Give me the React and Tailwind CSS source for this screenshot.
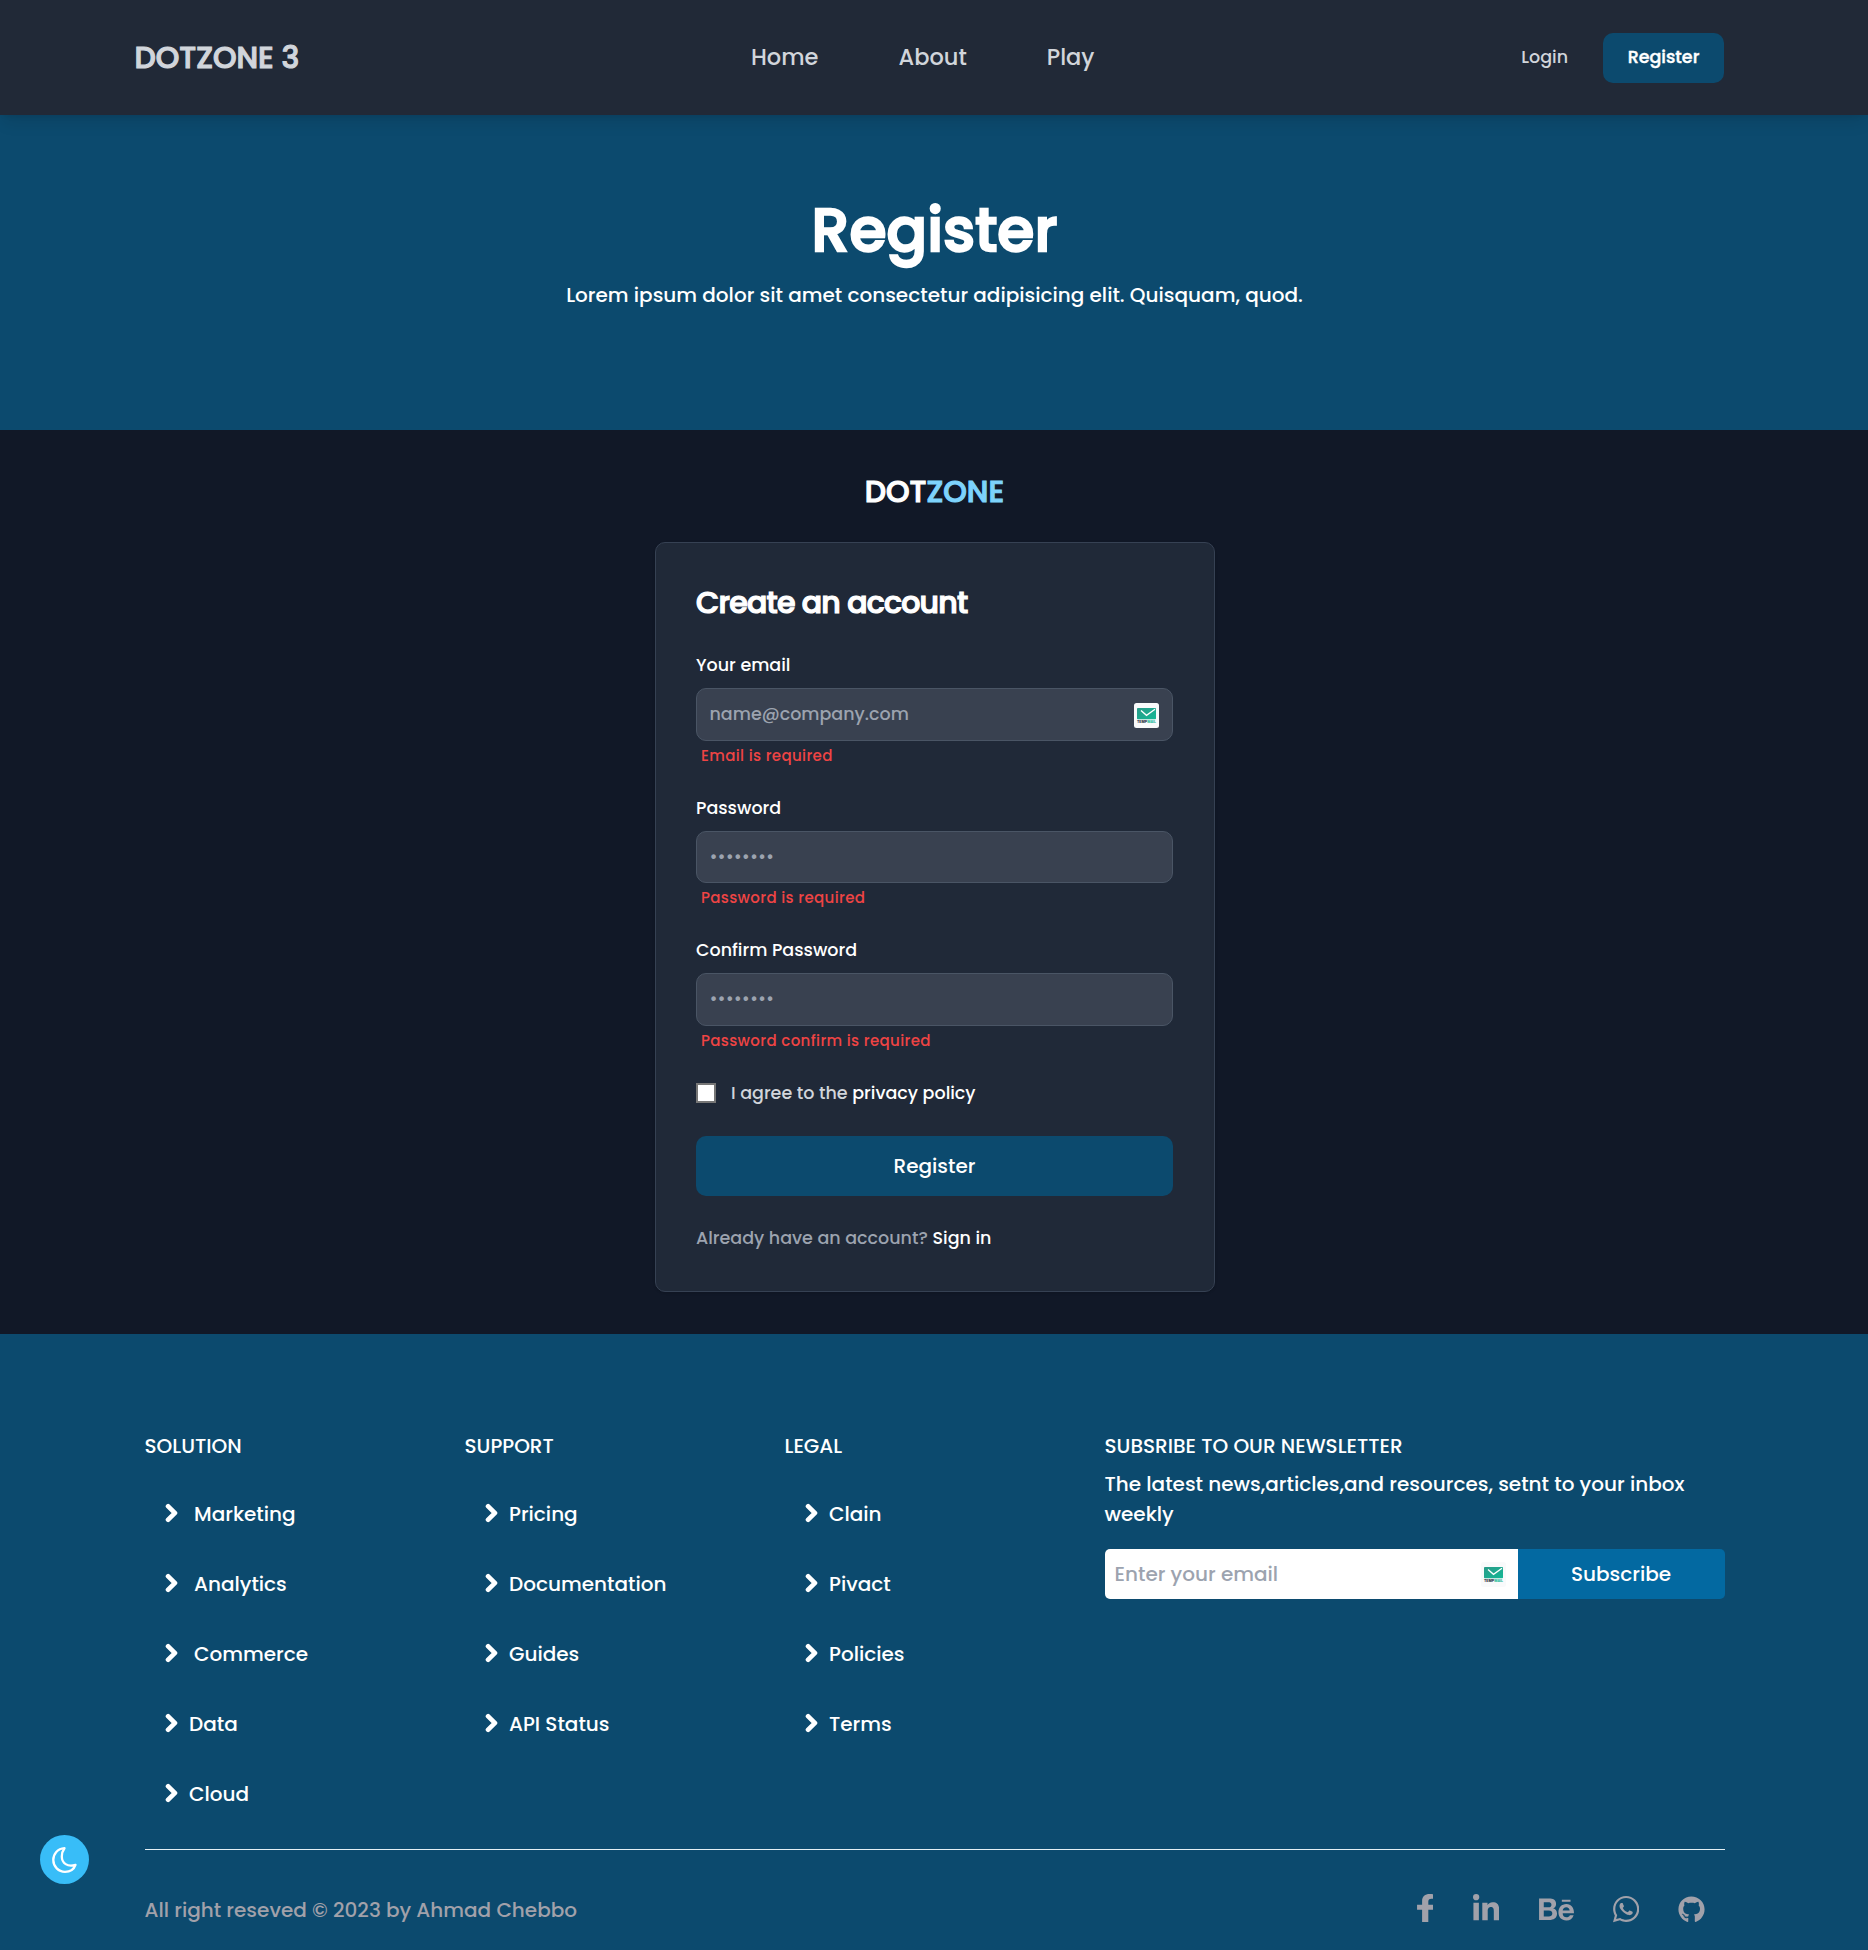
import {
  FaBehance,
  FaChevronRight,
  FaFacebookF,
  FaGithub,
  FaLinkedinIn,
  FaWhatsapp,
} from "react-icons/fa";

const columns = [
  {
    title: "SOLUTION",
    links: [
      { label: "Marketing", wide: true },
      { label: "Analytics", wide: true },
      { label: "Commerce", wide: true },
      { label: "Data" },
      { label: "Cloud" },
    ],
  },
  {
    title: "SUPPORT",
    links: [{ label: "Pricing" }, { label: "Documentation" }, { label: "Guides" }, { label: "API Status" }],
  },
  {
    title: "LEGAL",
    links: [{ label: "Clain" }, { label: "Pivact" }, { label: "Policies" }, { label: "Terms" }],
  },
];

function MailBadge({ className }) {
  return (
    <svg viewBox="0 0 25 25" className={className} aria-hidden="true">
      <defs>
        <linearGradient id="mail" x1="0" y1="0" x2="1" y2="1">
          <stop offset="0" stopColor="#2a9a88" />
          <stop offset="1" stopColor="#14b896" />
        </linearGradient>
      </defs>
      <rect width="25" height="25" rx="2.5" fill="#f9fafb" />
      <rect x="3" y="5" width="19" height="11.2" rx="0.8" fill="url(#mail)" />
      <path d="M7 7.5 L12.5 12.3 L21 6.3" fill="none" stroke="#ffffff" strokeWidth="1.3" />
      <text x="3" y="20.3" fontSize="3.6" fontWeight="800" fontFamily="Inter, sans-serif" fill="#1f2937" textLength="10" lengthAdjust="spacingAndGlyphs">
        TEMP
      </text>
      <text x="13.2" y="20.3" fontSize="3.6" fontWeight="800" fontFamily="Inter, sans-serif" fill="#14b896" textLength="8.8" lengthAdjust="spacingAndGlyphs">
        MAIL
      </text>
    </svg>
  );
}

function Field({ label, placeholder, error, type, badge }) {
  return (
    <div className="flex flex-col">
      <label className="mb-2.5 text-[17.5px] leading-[26px] text-white">{label}</label>
      <div className="flex h-[52.5px] items-center rounded-[10px] border border-gray-600 bg-[#394150] pt-px pr-[13px] pl-[12.5px]">
        <input
          type={type}
          placeholder={placeholder}
          className="min-w-0 flex-1 bg-transparent text-[17.5px] leading-[25px] text-white outline-none placeholder:text-[#9ca3af]"
        />
        {badge && <MailBadge className="mt-px size-[25px]" />}
      </div>
      <p className="mt-[5px] ml-[5px] text-[15px] leading-5 tracking-wide text-[#ef4444]">{error}</p>
    </div>
  );
}

export default function App() {
  return (
    <div className="flex h-[1950px] w-full flex-col overflow-hidden bg-[#111827] font-[Poppins,Inter,sans-serif] font-medium text-white">
      <header className="relative z-10 flex h-[115px] shrink-0 items-center bg-[#212937] pr-36 pl-[134.5px] text-[#d1d5db] shadow-lg">
        <div className="w-[616.5px] text-[30px] leading-10 [-webkit-text-stroke:1.1px]">DOTZONE 3</div>
        <nav className="flex gap-20 text-[22.5px] leading-[35px]">
          <a>Home</a>
          <a>About</a>
          <a>Play</a>
        </nav>
        <div className="ml-auto flex items-center gap-[35px] text-[17.5px] leading-[25px]">
          <a>Login</a>
          <a className="flex h-[50px] w-[121px] items-center justify-center rounded-[10px] bg-[#0c4a6e] text-white [-webkit-text-stroke:0.4px]">
            Register
          </a>
        </div>
      </header>

      <section className="flex h-[315px] shrink-0 flex-col items-center bg-[#0c4a6e] pt-[85px] pl-px">
        <h1 className="text-[60px] leading-[60px] [-webkit-text-stroke:2.3px]">Register</h1>
        <p className="mt-[21px] text-[20px] leading-[28px]">
          Lorem ipsum dolor sit amet consectetur adipisicing elit. Quisquam, quod.
        </p>
      </section>

      <main className="flex h-[904px] shrink-0 flex-col items-center pt-[42px]">
        <div className="pl-px text-[30px] leading-10 [-webkit-text-stroke:1.1px]">
          DOT<span className="text-[#7dd3fc]">ZONE</span>
        </div>
        <form className="mt-[30px] ml-0.5 h-[750px] w-[560px] rounded-[10px] border border-gray-700 bg-[#202938] pt-10 pr-[41px] pl-10 shadow">
          <h2 className="text-[30px] leading-[39px] tracking-tight [-webkit-text-stroke:1.2px]">Create an account</h2>
          <div className="mt-[30px] flex flex-col gap-[29px]">
            <Field label="Your email" type="email" placeholder="name@company.com" error="Email is required" badge />
            <Field label="Password" type="password" placeholder="••••••••" error="Password is required" />
            <Field
              label="Confirm Password"
              type="password"
              placeholder="••••••••"
              error="Password confirm is required"
            />
          </div>
          <div className="mt-[30px] flex items-center text-[17.5px] leading-[25px] text-[#d1d5db]">
            <span className="mr-[15px] size-5 border-2 border-[#767676] bg-white" />
            <span>
              I agree to the <a className="text-white">privacy policy</a>
            </span>
          </div>
          <button
            type="button"
            className="mt-[30px] h-[60px] w-full rounded-[10px] bg-[#0c4a6e] text-[20px] leading-[30px]"
          >
            Register
          </button>
          <p className="mt-[30px] text-[17.5px] leading-[25px] text-[#9ca3af]">
            Already have an account? <a className="text-white">Sign in</a>
          </p>
        </form>
      </main>

      <footer className="flex-1 bg-[#0c4a6e] pt-[97px] pr-[143.5px] pl-[144.5px] text-[20px] leading-[30px]">
        <div className="grid grid-cols-5 gap-5 border-b border-[#e5f0f5] pb-10">
          {columns.map((column) => (
            <div key={column.title}>
              <h3>{column.title}</h3>
              <ul className="mt-[38px] flex flex-col gap-10 pl-5">
                {column.links.map((link) => (
                  <li key={link.label} className={link.wide ? "flex items-center gap-[16.5px]" : "flex items-center gap-[11.5px]"}>
                    <FaChevronRight className="mb-0.5 h-5 w-[13px] overflow-visible" stroke="#ffffff" strokeWidth="38" />
                    {link.label}
                  </li>
                ))}
              </ul>
            </div>
          ))}
          <div className="col-span-2">
            <h3>SUBSRIBE TO OUR NEWSLETTER</h3>
            <p className="mt-2">The latest news,articles,and resources, setnt to your inbox weekly</p>
            <div className="mt-5 flex h-[50px]">
              <div className="flex min-w-0 flex-1 items-center rounded-l-[5px] bg-white pr-3 pl-[10px]">
                <input
                  placeholder="Enter your email"
                  className="min-w-0 flex-1 bg-transparent text-black outline-none placeholder:text-[#9ca3af]"
                />
                <MailBadge className="size-[25px] shrink-0" />
              </div>
              <button type="button" className="w-[207px] shrink-0 rounded-r-[5px] bg-[#0369a1]">
                Subscribe
              </button>
            </div>
          </div>
        </div>
        <div className="mt-[44px] flex items-center justify-between pr-5 text-[#a1a1aa]">
          <p>All right reseved © 2023 by Ahmad Chebbo</p>
          <div className="flex items-center gap-[39.5px]">
            <FaFacebookF className="mb-1 h-[28px] w-[16px]" preserveAspectRatio="none" viewBox="22 0 258 512" />
            <FaLinkedinIn className="mb-0.5 h-[30px] w-[26.25px]" />
            <FaBehance className="ml-px mb-px h-[31px] w-[35px]" />
            <FaWhatsapp className="-ml-px mb-0.5 h-[30px] w-[26.25px]" />
            <FaGithub className="mb-0.5 -ml-px size-[27px]" />
          </div>
        </div>
      </footer>

      <button
        type="button"
        aria-label="Toggle dark mode"
        className="fixed top-[1835px] left-10 flex size-[49px] items-center justify-center rounded-full bg-[#38bdf8]"
      >
        <svg viewBox="0 0 25 26" className="h-[26px] w-[25px]" fill="none" stroke="#ffffff" strokeWidth="2.3" strokeLinejoin="round">
          <path d="M12.5 1.2C5.5 1.6 1.3 7 1.3 13c0 6.500 5.200 11.800 11.700 11.800 5 0 9-2.800 10.500-7C15.500 20.500 9.800 16 9.800 9.500c0-3.500 1.200-6.300 2.700-8.300Z" />
        </svg>
      </button>
    </div>
  );
}
